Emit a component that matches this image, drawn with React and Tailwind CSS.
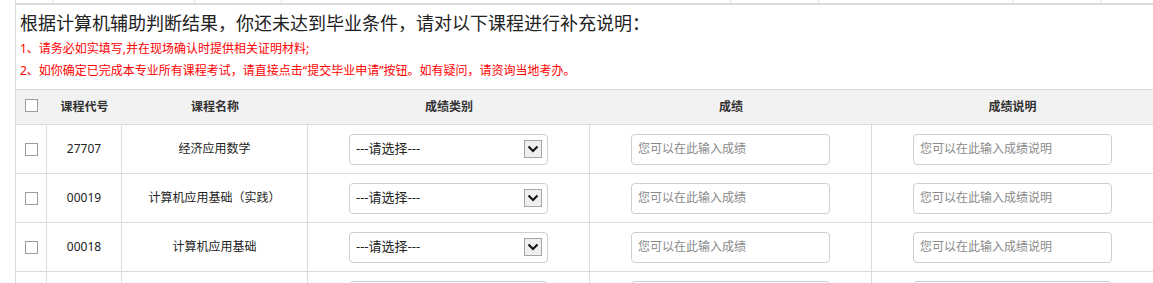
import React from 'react';

const rows = [
    { id: 1, code: '27707', name: '经济应用数学' },
    { id: 2, code: '00019', name: '计算机应用基础（实践）' },
    { id: 3, code: '00018', name: '计算机应用基础' },
    // last row only shows its top edge in the picture
    { id: 4, code: '', name: '', stub: true },
];

// widths of the cells in the table strip above (cut off at the top of the page)
const stripCells = ['w-[37px]', 'w-[142px]', 'w-[87px]', 'w-[449px]', 'w-[88px]', 'w-[194px]', 'w-[88px]'];

function Box() {
    return <span className="block w-[13px] h-[13px] border border-[#9c9c9c] bg-white" />;
}

function FakeSelect({ stub }) {
    return (
        <div className="w-[199px] h-[31px] border border-[#cfcfcf] rounded-[4px] bg-white flex items-center justify-between pl-[6px] pr-[5px]">
            {!stub && <span className="text-[13px] text-[#222]">---请选择---</span>}
            {!stub && (
                <span className="w-[18px] h-[18px] border border-[#a5a5a5] bg-[#efefef] flex items-center justify-center">
                    <svg width="12" height="8" viewBox="0 0 12 8" fill="none">
                        <path d="M1.5 1.5 L6 6 L10.5 1.5" stroke="#111" strokeWidth="2" />
                    </svg>
                </span>
            )}
        </div>
    );
}

function FakeInput({ placeholder, stub }) {
    return (
        <div className="w-[199px] h-[31px] border border-[#cfcfcf] rounded-[4px] bg-white flex items-center pl-[6px]">
            {!stub && <span className="text-[12px] text-[#8a8a8a]">{placeholder}</span>}
        </div>
    );
}

export default function App() {
    return (
        <div
            className="w-[1153px] h-[283px] overflow-hidden bg-white"
            style={{ fontFamily: '"Noto Sans", "Noto Sans CJK SC", sans-serif' }}
        >
            <div className="ml-[15px] h-full border-l border-[#dcdcdc]">
                {/* bottom edge of the previous table */}
                <div className="flex h-[5px] border-b-2 border-[#dcdcdc]">
                    {stripCells.map((w, i) => (
                        <div key={i} className={`${w} shrink-0 border-r border-[#e2e2e2]`} />
                    ))}
                    <div className="flex-1" />
                </div>

                <h2 className="pl-[4px] pt-[3px] text-[18px] leading-[30px] font-normal text-[#222]">
                    根据计算机辅助判断结果，你还未达到毕业条件，请对以下课程进行补充说明：
                </h2>
                <p className="pl-[4px] text-[12px] leading-[22px] text-[#f00]">
                    1、请务必如实填写,并在现场确认时提供相关证明材料;
                </p>
                <p className="pl-[4px] text-[12px] leading-[22px] text-[#f00]">
                    2、如你确定已完成本专业所有课程考试，请直接点击“提交毕业申请”按钮。如有疑问，请资询当地考办。
                </p>

                <div className="mt-[7px]">
                    <div className="grid grid-cols-[31px_75px_186px_282px_282px_281px] h-[36px] bg-[#f2f2f2] border-y border-[#dcdcdc] text-[12px] font-bold text-[#333]">
                        <div className="flex items-center justify-center pb-[3px]">
                            <Box />
                        </div>
                        <div className="flex items-center justify-center">课程代号</div>
                        <div className="flex items-center justify-center">课程名称</div>
                        <div className="flex items-center justify-center">成绩类别</div>
                        <div className="flex items-center justify-center">成绩</div>
                        <div className="flex items-center justify-center">成绩说明</div>
                    </div>

                    {rows.map((r) => (
                        <div
                            key={r.id}
                            className="grid grid-cols-[31px_75px_186px_282px_282px_281px] h-[49px] border-b border-[#dcdcdc] text-[12px] text-[#222]"
                        >
                            <div className="flex items-center justify-center border-r border-[#dcdcdc]">
                                {!r.stub && <Box />}
                            </div>
                            <div className="flex items-center justify-center border-r border-[#dcdcdc]">{r.code}</div>
                            <div className="flex items-center justify-center border-r border-[#dcdcdc]">{r.name}</div>
                            <div className="flex items-center justify-center border-r border-[#dcdcdc]">
                                <FakeSelect stub={r.stub} />
                            </div>
                            <div className="flex items-center justify-center border-r border-[#dcdcdc]">
                                <FakeInput placeholder="您可以在此输入成绩" stub={r.stub} />
                            </div>
                            <div className="flex items-center justify-center">
                                <FakeInput placeholder="您可以在此输入成绩说明" stub={r.stub} />
                            </div>
                        </div>
                    ))}
                </div>
            </div>
        </div>
    );
}
